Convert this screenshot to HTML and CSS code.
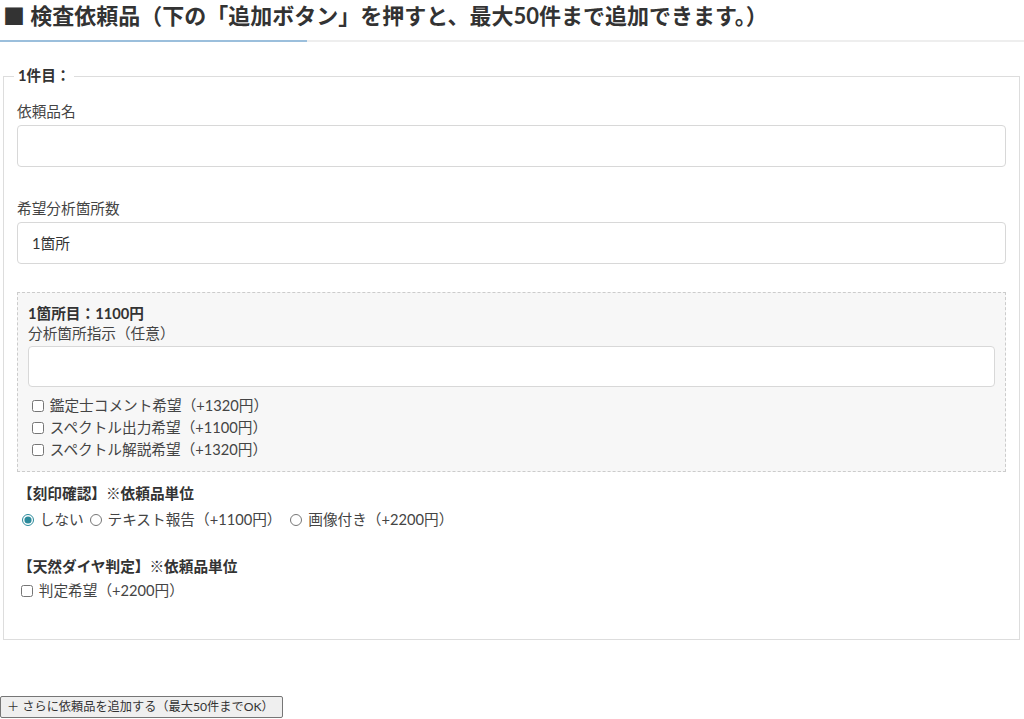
FILE: index.html
```html
<!DOCTYPE html>
<html lang="ja">
<head>
    <meta charset="UTF-8">
    <meta name="viewport" content="width=device-width, initial-scale=1.0">
    <title>検査依頼品</title>
    <link rel="stylesheet" href="styles.css">
</head>
<body>
    <h2 class="section-title">■ 検査依頼品（下の「追加ボタン」を押すと、最大50件まで追加できます。）</h2>

    <fieldset class="item">
        <legend>1件目：</legend>

        <div class="field">
            <label class="field-label">依頼品名</label>
            <input type="text" class="text-input">
        </div>

        <div class="field count">
            <label class="field-label">希望分析箇所数</label>
            <select class="text-input select-input">
                <option>1箇所</option>
            </select>
        </div>

        <div class="spot-box">
            <div class="spot-title">1箇所目：1100円</div>
            <label class="field-label">分析箇所指示（任意）</label>
            <input type="text" class="text-input spot-input">
            <div class="check-list">
                <label class="check"><input type="checkbox"> 鑑定士コメント希望（+1320円）</label>
                <label class="check"><input type="checkbox"> スペクトル出力希望（+1100円）</label>
                <label class="check"><input type="checkbox"> スペクトル解説希望（+1320円）</label>
            </div>
        </div>

        <div class="option-group">
            <div class="option-title">【刻印確認】※依頼品単位</div>
            <div class="radio-row">
                <label class="check"><input type="radio" name="stamp" checked> しない</label>
                <label class="check"><input type="radio" name="stamp"> テキスト報告（+1100円）</label>
                <label class="check last"><input type="radio" name="stamp"> 画像付き（+2200円）</label>
            </div>
        </div>

        <div class="option-group diamond">
            <div class="option-title">【天然ダイヤ判定】※依頼品単位</div>
            <label class="check"><input type="checkbox"> 判定希望（+2200円）</label>
        </div>
    </fieldset>

    <button class="add-btn" type="button">＋ さらに依頼品を追加する（最大50件までOK）</button>
</body>
</html>
```

FILE: styles.css
```css
* {
    box-sizing: border-box;
}

body {
    margin: 0;
    font-family: Lato, "Noto Sans CJK JP", sans-serif;
    font-size: 11pt;
    color: #444;
    background: #fff;
}

.section-title {
    position: relative;
    margin: 0;
    padding: 2px 3px 0;
    height: 42px;
    font-size: 22px;
    line-height: 28px;
    color: #333;
    border-bottom: 2px solid #eee;
}

.section-title::after {
    content: "";
    position: absolute;
    left: 0;
    bottom: -2px;
    width: 307px;
    height: 2px;
    background: #9bbfdc;
}

.item {
    margin: 24px 4px 0 3px;
    padding: 16px 13px 37px;
    border: 1px solid #ddd;
}

.item legend {
    margin-left: -3px;
    padding: 0 4px;
    font-weight: bold;
    line-height: 20px;
    color: #333;
}

.field {
    margin-bottom: 32px;
}

.field.count {
    margin-bottom: 28px;
}

.field-label {
    display: block;
    line-height: 20px;
}

.text-input {
    display: block;
    width: 100%;
    height: 42px;
    margin-top: 3px;
    padding: 0 14px;
    border: 1px solid #d8d8d8;
    border-radius: 4px;
    background: #fff;
    font: inherit;
    color: #333;
}

.select-input {
    appearance: none;
    -webkit-appearance: none;
}

.spot-box {
    padding: 11px 10px 10px;
    background: #f7f7f7;
    border: 1px dashed #ccc;
}

.spot-title {
    font-weight: bold;
    line-height: 20px;
    color: #333;
}

.spot-input {
    height: 41px;
    margin-top: 2px;
}

.check-list {
    margin-top: 8px;
}

.check {
    display: block;
    line-height: 22px;
}

.check input {
    width: 12px;
    height: 12px;
    margin: 0 2px 0 4px;
    vertical-align: -1px;
}

.check input[type="radio"] {
    accent-color: #2b8a9b;
}

.option-group {
    margin-top: 11px;
    padding-left: 1px;
}

.option-title {
    font-weight: bold;
    line-height: 22px;
    color: #333;
}

.radio-row {
    display: flex;
    gap: 2px;
    margin-top: 4px;
}

.radio-row .last {
    margin-left: 3px;
}

.diamond {
    margin-top: 25px;
}

.diamond .check {
    margin-top: 2px;
}

.diamond .check input {
    margin-left: 3px;
}

.add-btn {
    display: block;
    margin-top: 56px;
    width: 283px;
    height: 22px;
    padding: 0 0 0 6px;
    text-align: left;
    font: inherit;
    font-size: 12.2px;
    line-height: 20px;
    color: #333;
    background: #efefef;
    border: 1px solid #767676;
    border-radius: 2px;
}
```
